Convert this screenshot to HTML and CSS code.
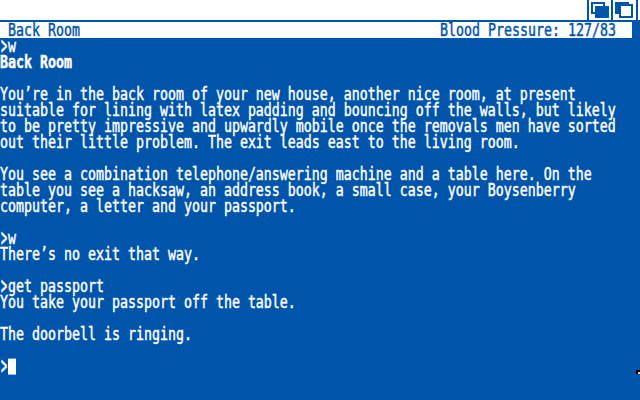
FILE: index.html
```html
<!DOCTYPE html>
<html lang="en">
<head>
<meta charset="utf-8">
<title>Back Room</title>
<link rel="stylesheet" href="styles.css">
</head>
<body>
<main class="screen">
<header class="titlebar">
<svg class="gadgets" width="53" height="20" viewBox="0 0 53 20" shape-rendering="crispEdges" aria-hidden="true">
<path fill="#0055aa" d="M0 0h2v20h-2zM24 0h2v20h-2zM49 0h2v20h-2z"/>
<path fill="#0055aa" d="M4 2h14v4h4v12h-14v-4h-4z"/>
<path fill="#fff" d="M6 4h10v2h-8v6h-2z"/>
<path fill="#0055aa" d="M28 2h14v2h4v14h-14v-4h-4z"/>
<path fill="#fff" d="M34 6h10v10h-10z"/>
</svg>
</header>
<div class="status"><pre class="type status-type"><span> Back Room</span><span>Blood Pressure: 127/83</span></pre></div>
<pre class="type story"><span class="prompt">&gt;</span>w
<b>Back Room</b>

You’re in the back room of your new house, another nice room, at present
suitable for lining with latex padding and bouncing off the walls, but likely
to be pretty impressive and upwardly mobile once the removals men have sorted
out their little problem. The exit leads east to the living room.

You see a combination telephone/answering machine and a table here. On the
table you see a hacksaw, an address book, a small case, your Boysenberry
computer, a letter and your passport.

<span class="prompt">&gt;</span>w
There’s no exit that way.

<span class="prompt">&gt;</span>get passport
You take your passport off the table.

The doorbell is ringing.

<span class="prompt">&gt;</span><span class="cursor"></span></pre>
<svg class="pointer" width="4" height="4" shape-rendering="crispEdges" aria-hidden="true"><path fill="#000" d="M0 0h4v4h-4z"/><path fill="#ffccaa" d="M2 2h2v2h-2z"/></svg>
</main>
</body>
</html>
```
FILE: styles.css
```css
* { box-sizing: border-box; }
body { margin: 0; }
.screen {
  position: relative;
  width: 640px;
  height: 400px;
  overflow: hidden;
  background: #0055aa;
  color: #fff;
}
.titlebar {
  display: flex;
  justify-content: flex-end;
  height: 20px;
  background: #fff;
}
.gadgets { display: block; }
.status {
  width: 632px;
  height: 16px;
  margin-top: 2px;
  background: #fff;
  color: #0055aa;
}
.type {
  margin: 0;
  font-family: "DejaVu Sans Mono", monospace;
  font-size: 13.295px;
  line-height: 12px;
  -webkit-text-stroke: 0.35px currentColor;
  transform: translateY(0.6px) scaleY(1.33333);
  transform-origin: 0 0;
}
.status-type {
  display: flex;
  justify-content: space-between;
  padding-right: 16px;
}
.story b { font-weight: bold; }
.prompt {
  display: inline-block;
  height: 12px;
  vertical-align: top;
  transform: scale(0.75, 1.35);
}
.cursor {
  display: inline-block;
  width: 8px;
  height: 12px;
  margin-top: -0.45px;
  vertical-align: top;
  background: #fff;
}
.pointer {
  position: absolute;
  left: 636px;
  top: 370px;
}
```
